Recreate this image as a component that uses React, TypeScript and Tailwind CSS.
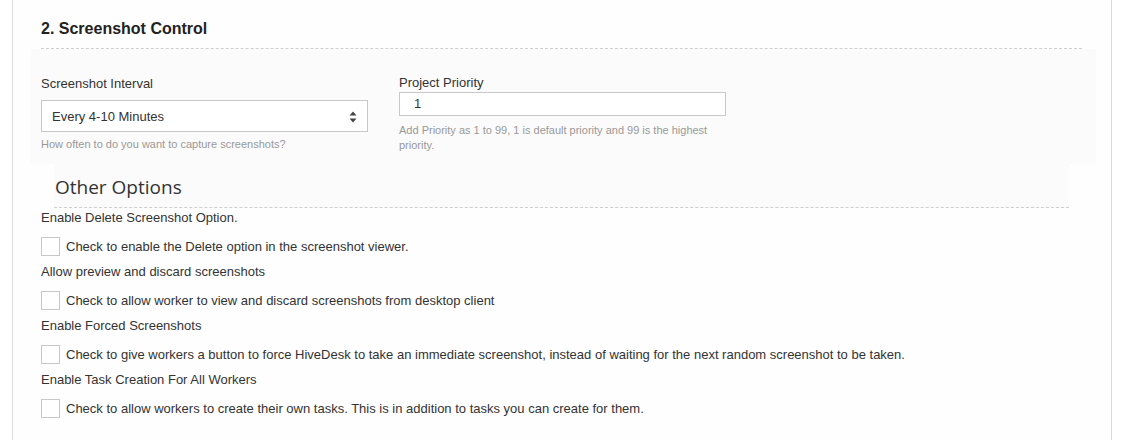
const options = [
  {
    label: "Enable Delete Screenshot Option.",
    text: "Check to enable the Delete option in the screenshot viewer.",
  },
  {
    label: "Allow preview and discard screenshots",
    text: "Check to allow worker to view and discard screenshots from desktop client",
  },
  {
    label: "Enable Forced Screenshots",
    text: "Check to give workers a button to force HiveDesk to take an immediate screenshot, instead of waiting for the next random screenshot to be taken.",
  },
  {
    label: "Enable Task Creation For All Workers",
    text: "Check to allow workers to create their own tasks. This is in addition to tasks you can create for them.",
  },
];

function SortIcon() {
  return (
    <svg width="8" height="12" viewBox="0 0 8 12" className="fill-[#444]">
      <path d="M4 0.5 L7.5 4.5 L0.5 4.5 Z" />
      <path d="M4 11.5 L7.5 7.5 L0.5 7.5 Z" />
    </svg>
  );
}

export default function App() {
  return (
    <div className="w-[1124px] h-[440px] bg-white font-['Liberation_Sans',Arial,sans-serif] text-[#333] overflow-hidden">
      <div className="ml-[12px] w-[1100px] h-full border-x border-[#dcdcdc] bg-[#fefefe]">
        <div className="pl-[28px] pr-[29px]">
          <h2 className="pt-[19px] pb-[10px] text-[16px] leading-[19px] font-bold text-[#222] border-b border-dashed border-[#cfcfcf]">
            2. Screenshot Control
          </h2>
        </div>

        <div className="ml-[17px] mr-[15px] bg-[#fbfbfb] pl-[11px] pt-[27px] h-[115px] flex gap-[31px]">
          <div className="w-[327px]">
            <div className="text-[13px] leading-[16px]">Screenshot Interval</div>
            <div className="mt-[8px] h-[32px] border border-[#c8c8c8] bg-white flex items-center justify-between pl-[10px] pr-[10px] pt-[2px]">
              <span className="text-[13px]">Every 4-10 Minutes</span>
              <SortIcon />
            </div>
            <div className="mt-[5px] text-[11px] leading-[14px] text-[#999]">
              How often to do you want to capture screenshots?
            </div>
          </div>
          <div className="w-[327px] -mt-[1px]">
            <div className="text-[13px] leading-[16px]">Project Priority</div>
            <div className="mt-[1px] h-[24px] border border-[#c8c8c8] bg-white flex items-center pl-[14px]">
              <span className="text-[13px]">1</span>
            </div>
            <div className="mt-[7px] text-[11px] leading-[15px] text-[#999] w-[320px]">
              Add Priority as 1 to 99, 1 is default priority and 99 is the highest priority.
            </div>
          </div>
        </div>

        <div className="ml-[28px] mr-[42px]">
          <div className="ml-[13px] bg-[#fbfbfb] pt-[10px] pb-[6px] pl-[1px] border-b border-dashed border-[#cfcfcf]">
            <span className="font-['Open_Sans',sans-serif] text-[19px] leading-[26px] text-[#333]">Other Options</span>
          </div>
        </div>

        <div className="pl-[28px] pt-[1px]">
          {options.map((o) => (
            <div key={o.label}>
              <div className="text-[13px] leading-[18px] h-[18px]">{o.label}</div>
              <label className="mt-[10px] mb-[7px] flex items-center gap-[6px] h-[19px]">
                <span className="w-[19px] h-[19px] border border-[#c8c8c8] bg-white shrink-0" />
                <span className="text-[13px] leading-[18px]">{o.text}</span>
              </label>
            </div>
          ))}
        </div>
      </div>
    </div>
  );
}
